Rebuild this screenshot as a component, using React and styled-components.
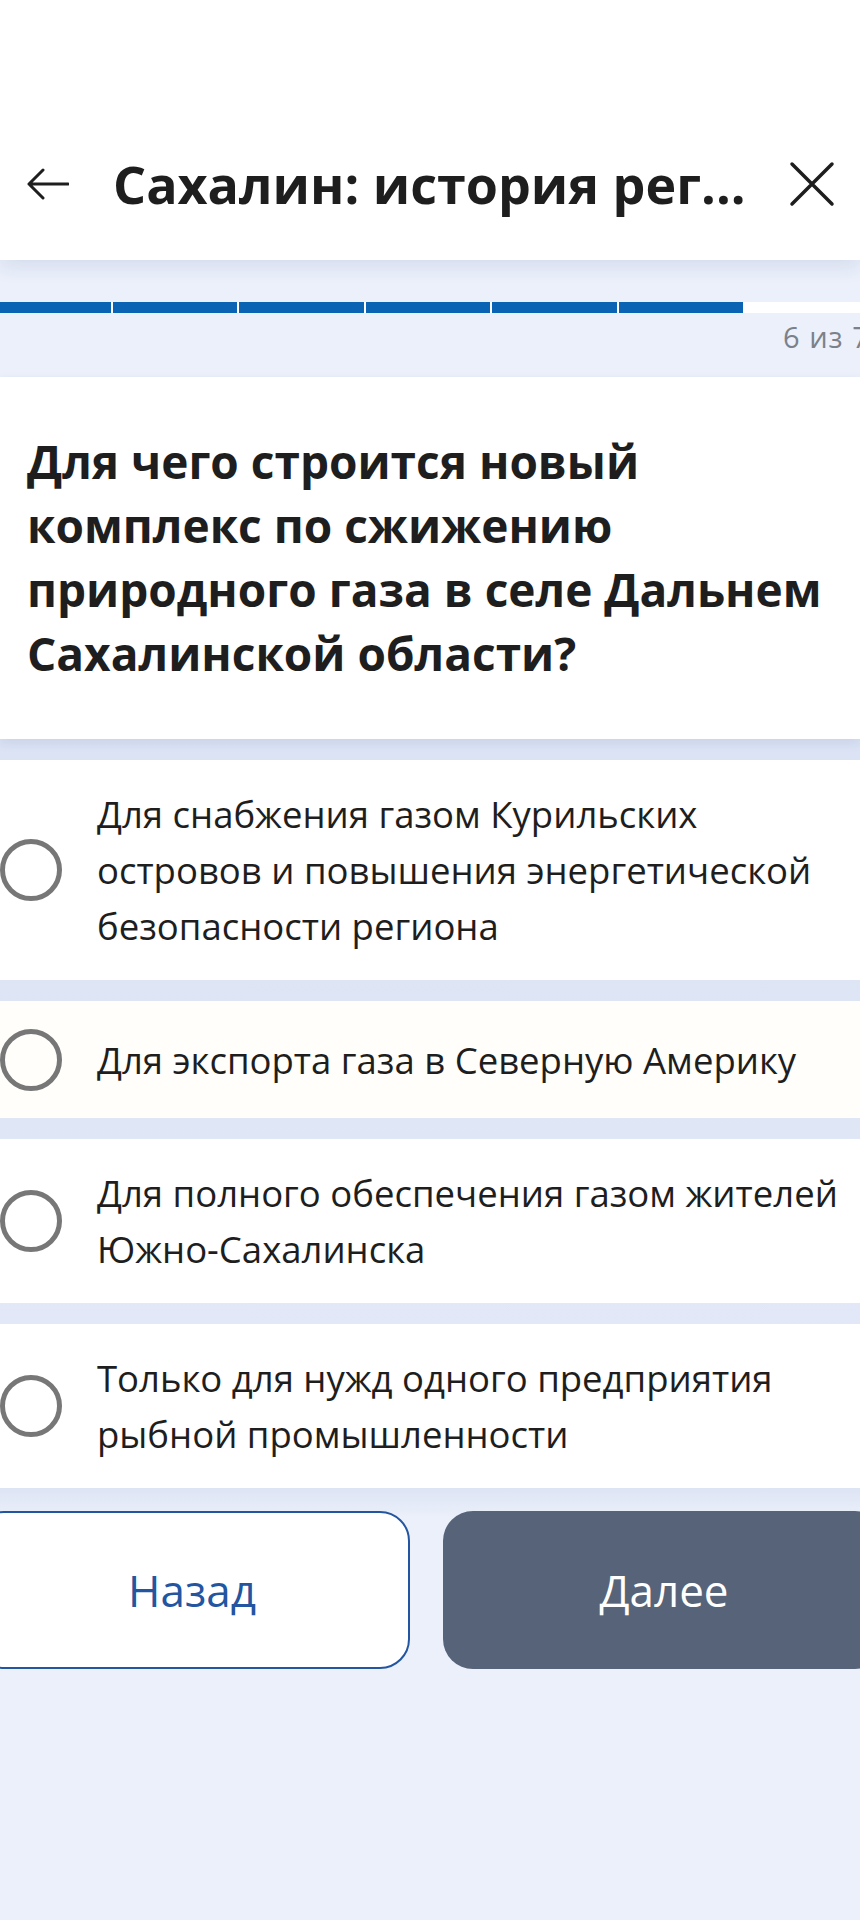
import React from 'react';
import styled, { createGlobalStyle } from 'styled-components';

const GlobalStyle = createGlobalStyle`
  html, body {
    margin: 0;
    padding: 0;
    background: #ebf0fa;
    overflow-x: hidden;
  }
  * {
    box-sizing: border-box;
  }
`;

const answers = [
  'Для снабжения газом Курильских островов и повышения энергетической безопасности региона',
  'Для экспорта газа в Северную Америку',
  'Для полного обеспечения газом жителей Южно-Сахалинска',
  'Только для нужд одного предприятия рыбной промышленности',
];

const TOTAL = 7;
const CURRENT = 6;

const App = () => {
  return (
    <Page>
      <GlobalStyle />
      <Header>
        <IconButton aria-label="Назад">
          <svg width="42" height="32" viewBox="0 0 42 32" fill="none">
            <path
              d="M2 16H41M16 2L2 16L16 30"
              stroke="#1e1e1e"
              strokeWidth="3"
              strokeLinecap="round"
              strokeLinejoin="round"
            />
          </svg>
        </IconButton>
        <Title>Сахалин: история рег...</Title>
        <IconButton aria-label="Закрыть">
          <svg width="46" height="46" viewBox="0 0 46 46" fill="none">
            <path
              d="M3 3L43 43M43 3L3 43"
              stroke="#1e1e1e"
              strokeWidth="3.5"
              strokeLinecap="round"
            />
          </svg>
        </IconButton>
      </Header>

      <ProgressArea>
        <Track>
          {Array.from({ length: TOTAL }).map((_, i) => (
            <Segment key={i} $done={i < CURRENT} />
          ))}
        </Track>
        <Counter>
          {CURRENT} из {TOTAL}
        </Counter>
      </ProgressArea>

      <Question>
        Для чего строится новый комплекс по сжижению природного газа в селе
        Дальнем Сахалинской области?
      </Question>

      <Answers>
        {answers.map((a, i) => (
          <Answer key={i} $tint={i === 1}>
            <Radio />
            <AnswerText>{a}</AnswerText>
          </Answer>
        ))}
      </Answers>

      <Actions>
        <BackButton>Назад</BackButton>
        <NextButton>Далее</NextButton>
      </Actions>
    </Page>
  );
};

const Page = styled.div`
  min-height: 1920px;
  background: #ebf0fa;
  font-family: 'Open Sans', 'Noto Sans', sans-serif;
  color: #1e1e1e;
`;

const Header = styled.header`
  position: relative;
  z-index: 2;
  height: 260px;
  padding: 108px 25px 0 27px;
  display: flex;
  align-items: center;
  background: #fff;
  box-shadow: 0 6px 18px rgba(40, 70, 140, 0.12);
`;

const IconButton = styled.button`
  display: flex;
  align-items: center;
  justify-content: center;
  padding: 0;
  border: none;
  background: none;
`;

const Title = styled.h1`
  margin: 0 auto 0 44px;
  font-size: 52px;
  font-weight: 700;
  line-height: 70px;
  white-space: nowrap;
`;

const ProgressArea = styled.div`
  width: 884px;
  margin-left: -14px;
  padding: 42px 0 0;
  height: 117px;
`;

const Track = styled.div`
  display: flex;
  gap: 2px;
  height: 11px;
  background: #fff;
`;

const Segment = styled.div`
  flex: 1;
  background: ${(p) => (p.$done ? '#0a63b3' : '#fff')};
`;

const Counter = styled.div`
  padding: 6px 0 0 797px;
  font-size: 29px;
  line-height: 36px;
  letter-spacing: 1px;
  color: #7b818c;
  white-space: nowrap;
`;

const Question = styled.h2`
  position: relative;
  z-index: 1;
  margin: 0;
  padding: 52px 20px 54px 27px;
  background: #fff;
  font-size: 46px;
  font-weight: 700;
  line-height: 64px;
  box-shadow: 0 4px 10px rgba(40, 70, 140, 0.1);
`;

const Answers = styled.div`
  display: flex;
  flex-direction: column;
  gap: 21px;
  padding-top: 21px;
  background: linear-gradient(#dbe3f4, #e3e9f7);
`;

const Answer = styled.label`
  display: flex;
  align-items: center;
  gap: 35px;
  min-height: 117px;
  padding: 26px 6px 26px 0;
  background: ${(p) => (p.$tint ? '#fffefb' : '#fff')};
  cursor: pointer;
`;

const Radio = styled.span`
  flex: none;
  width: 62px;
  height: 62px;
  border: 5px solid #777;
  border-radius: 50%;
`;

const AnswerText = styled.span`
  font-size: 36.5px;
  line-height: 56px;
  color: #1e1e1e;
`;

const Actions = styled.div`
  display: grid;
  grid-template-columns: 436px 1fr;
  gap: 33px;
  width: 911px;
  margin-left: -26px;
  padding-top: 23px;
  background: linear-gradient(#dde4f4, #ebf0fa 30px);
`;

const ButtonBase = styled.button`
  height: 158px;
  border-radius: 30px;
  font-family: 'Open Sans', 'Noto Sans', sans-serif;
  font-size: 44px;
  font-weight: 400;
`;

const BackButton = styled(ButtonBase)`
  border: 2.5px solid #2355a0;
  background: #fff;
  color: #2355a0;
`;

const NextButton = styled(ButtonBase)`
  border: none;
  background: #566379;
  color: #fff;
`;

export default App;
